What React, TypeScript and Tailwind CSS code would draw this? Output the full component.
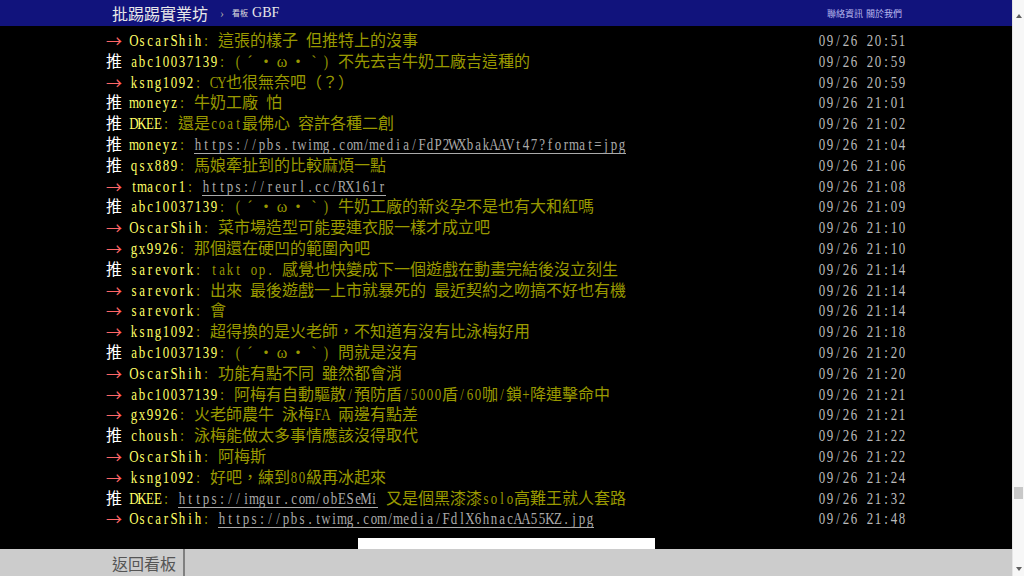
import React from 'react';

type Push = {
  tag: '推' | '→';
  user: string;
  content: string;
  link?: string;
  after?: string;
  time: string;
};

const pushes: Push[] = [
  { tag: '→', user: 'OscarShih', content: '這張的樣子 但推特上的沒事', time: '09/26 20:51' },
  { tag: '推', user: 'abc10037139', content: '(ˊ・ω・ˋ) 不先去吉牛奶工廠吉這種的', time: '09/26 20:59' },
  { tag: '→', user: 'ksng1092', content: 'CY也很無奈吧（？）', time: '09/26 20:59' },
  { tag: '推', user: 'moneyz', content: '牛奶工廠 怕', time: '09/26 21:01' },
  { tag: '推', user: 'DKEE', content: '還是coat最佛心 容許各種二創', time: '09/26 21:02' },
  { tag: '推', user: 'moneyz', content: '', link: 'https://pbs.twimg.com/media/FdP2WXbakAAVt47?format=jpg', time: '09/26 21:04' },
  { tag: '推', user: 'qsx889', content: '馬娘牽扯到的比較麻煩一點', time: '09/26 21:06' },
  { tag: '→', user: 'tmacor1', content: '', link: 'https://reurl.cc/RX161r', time: '09/26 21:08' },
  { tag: '推', user: 'abc10037139', content: '(ˊ・ω・ˋ) 牛奶工廠的新炎孕不是也有大和紅嗎', time: '09/26 21:09' },
  { tag: '→', user: 'OscarShih', content: '菜市場造型可能要連衣服一樣才成立吧', time: '09/26 21:10' },
  { tag: '→', user: 'gx9926', content: '那個還在硬凹的範圍內吧', time: '09/26 21:10' },
  { tag: '推', user: 'sarevork', content: 'takt op. 感覺也快變成下一個遊戲在動畫完結後沒立刻生', time: '09/26 21:14' },
  { tag: '→', user: 'sarevork', content: '出來 最後遊戲一上市就暴死的 最近契約之吻搞不好也有機', time: '09/26 21:14' },
  { tag: '→', user: 'sarevork', content: '會', time: '09/26 21:14' },
  { tag: '→', user: 'ksng1092', content: '超得換的是火老師，不知道有沒有比泳梅好用', time: '09/26 21:18' },
  { tag: '推', user: 'abc10037139', content: '(ˊ・ω・ˋ) 問就是沒有', time: '09/26 21:20' },
  { tag: '→', user: 'OscarShih', content: '功能有點不同 雖然都會消', time: '09/26 21:20' },
  { tag: '→', user: 'abc10037139', content: '阿梅有自動驅散/預防盾/5000盾/60咖/鎖+降連擊命中', time: '09/26 21:21' },
  { tag: '→', user: 'gx9926', content: '火老師農牛 泳梅FA 兩邊有點差', time: '09/26 21:21' },
  { tag: '推', user: 'choush', content: '泳梅能做太多事情應該沒得取代', time: '09/26 21:22' },
  { tag: '→', user: 'OscarShih', content: '阿梅斯', time: '09/26 21:22' },
  { tag: '→', user: 'ksng1092', content: '好吧，練到80級再冰起來', time: '09/26 21:24' },
  { tag: '推', user: 'DKEE', content: '', link: 'https://imgur.com/obESeMi', after: ' 又是個黑漆漆solo高難王就人套路', time: '09/26 21:32' },
  { tag: '→', user: 'OscarShih', content: '', link: 'https://pbs.twimg.com/media/FdlX6hnacAA55KZ.jpg', time: '09/26 21:48' },
];

// full-width glyphs take two columns, like the terminal
const isWide = (c: string) => {
  const n = c.codePointAt(0) || 0;
  return n >= 0x2000 || (n >= 0x2b0 && n < 0x400);
};

const Mono: React.FC<{ text: string }> = ({ text }) => (
  <>
    {Array.from(text).map((c, i) =>
      c === '→' ? (
        <span
          key={i}
          className="inline-block h-[20.8px] w-[16px] -translate-y-[1.5px] text-center align-top font-['Noto_Sans_CJK_TC',sans-serif] leading-[20.8px]"
        >
          {c}
        </span>
      ) : isWide(c) ? (
        <span key={i} className="inline-block w-[16px] text-center">
          {c}
        </span>
      ) : (
        <span key={i} className="inline-flex w-[8px] scale-x-[0.76] justify-center text-[17px]">
          {c}
        </span>
      )
    )}
  </>
);

const PushRow: React.FC<{ push: Push }> = ({ push }) => (
  <div className="flex h-[20.8px] justify-between whitespace-nowrap leading-[20.8px]">
    <div>
      <span className={push.tag === '推' ? 'text-white' : 'text-[#f66]'}>
        <Mono text={push.tag + ' '} />
      </span>
      <span className="text-[#ff6]">
        <Mono text={push.user} />
      </span>
      <span className="text-[#990]">
        <Mono text={': ' + push.content} />
        {push.link && (
          <span className="border-b border-[#aaa] text-[#aaa]">
            <Mono text={push.link} />
          </span>
        )}
        {push.after && <Mono text={push.after} />}
      </span>
    </div>
    <div className="text-[#bbb]">
      <Mono text={push.time} />
    </div>
  </div>
);

export default function App() {
  return (
    <div className="flex h-[576px] w-[1024px] overflow-hidden bg-black font-['Liberation_Serif','Noto_Sans_CJK_TC',serif] text-[16px]">
      <div className="flex min-w-0 flex-1 flex-col">
        {/* Top bar */}
        <header className="h-[26px] shrink-0 bg-[#11137c]">
          <div className="mx-auto flex h-full w-[800px] items-center justify-between">
            <div className="flex items-center pl-[6px]">
              <span className="font-['Noto_Sans_CJK_TC',sans-serif] text-[16px] leading-none text-[#e8e8e8]">批踢踢實業坊</span>
              <span className="ml-[12px] text-[12px] leading-none text-[#aaa]">›</span>
              <span className="ml-[8px] font-['Noto_Sans_CJK_TC',sans-serif] text-[8px] leading-none text-[#ddd]">看板</span>
              <span className="ml-[4px] text-[14px] leading-none text-[#e8e8e8]">GBF</span>
            </div>
            <div className="flex gap-[3px] pr-[4px] font-['Noto_Sans_CJK_TC',sans-serif] text-[9px] leading-none text-[#b8b8ee]">
              <span>聯絡資訊</span>
              <span>關於我們</span>
            </div>
          </div>
        </header>

        {/* Pushes */}
        <main className="min-h-0 flex-1 overflow-hidden pt-[5px]">
          <div className="mx-auto w-[800px]">
            {pushes.map((p, i) => (
              <PushRow key={i} push={p} />
            ))}
          </div>
          <div className="mx-auto mt-[8px] h-[20px] w-[297px] bg-white" />
        </main>

        {/* Bottom bar */}
        <footer className="h-[27px] shrink-0 bg-[#cccccc]">
          <div className="mx-auto flex h-full w-[800px]">
            <div className="flex items-center border-r-2 border-[#808080] pr-[7px] pl-[6px] font-['Noto_Sans_CJK_TC',sans-serif] text-[16px] text-[#555]">
              返回看板
            </div>
          </div>
        </footer>
      </div>

      {/* Scrollbar */}
      <div className="flex w-[12px] shrink-0 flex-col items-center border-l border-[#e6e6e6] bg-[#f7f7f7]">
        <svg className="mt-[14px] h-[4px] w-[6px]" viewBox="0 0 6 4">
          <path d="M3 0 L6 4 L0 4 Z" fill="#606060" />
        </svg>
        <div className="mt-[469px] h-[12px] w-[9px] bg-[#c8c8c8]" />
        <div className="flex-1" />
        <svg className="mb-[5px] h-[4px] w-[6px]" viewBox="0 0 6 4">
          <path d="M0 0 L6 0 L3 4 Z" fill="#606060" />
        </svg>
      </div>
    </div>
  );
}
